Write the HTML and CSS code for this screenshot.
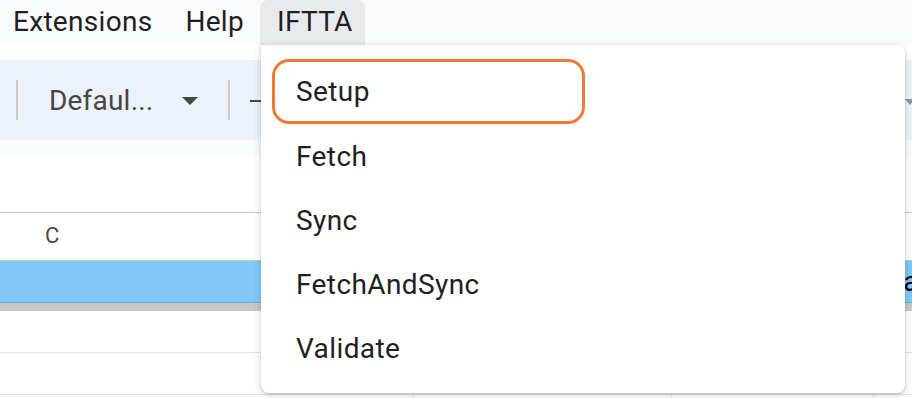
FILE: index.html
```html
<!DOCTYPE html>
<html>
<head>
<meta charset="utf-8">
<link rel="stylesheet" href="styles.css">
</head>
<body>
<div class="page">
  <div class="menubar">
    <span class="mitem ext">Extensions</span>
    <span class="mitem help">Help</span>
    <span class="mitem tab">IFTTA</span>
  </div>
  <div class="toolbar">
    <span class="sep"></span>
    <span class="font">Defaul...</span>
    <svg class="caret" width="16" height="8" viewBox="0 0 16 8"><path d="M0 0h16L8 8z" fill="#444746"/></svg>
    <span class="sep"></span>
    <span class="dash"></span>
    <span class="spacer"></span>
    <svg class="caret2" width="10" height="6" viewBox="0 0 10 6"><path d="M0 0h10L5 6z" fill="#8e918f"/></svg>
  </div>
  <div class="strip"></div>
  <div class="formula"></div>
  <div class="grid">
    <div class="row header"><span class="colname">C</span></div>
    <div class="row selected"><span class="rtext">ar</span></div>
    <div class="freeze"></div>
    <div class="row plain"></div>
    <div class="row plain cols"><span class="vl v1"></span><span class="vl v2"></span><span class="vl v3"></span></div>
  </div>

  <div class="menu">
    <div class="item active">Setup</div>
    <div class="item">Fetch</div>
    <div class="item">Sync</div>
    <div class="item">FetchAndSync</div>
    <div class="item">Validate</div>
  </div>
</div>
</body>
</html>
```

FILE: styles.css
```css
html, body {
  margin: 0;
  padding: 0;
  background: #ffffff;
  font-family: Roboto, "Liberation Sans", sans-serif;
  overflow: hidden;
}
.page {
  position: relative;
  width: 912px;
  height: 398px;
  background: #ffffff;
}
.menubar {
  height: 45px;
  background: #f9fbfd;
  display: flex;
  align-items: stretch;
  font-size: 28px;
  letter-spacing: 0.3px;
  color: #1f1f1f;
}
.mitem {
  display: flex;
  align-items: center;
  padding-bottom: 3px;
  box-sizing: border-box;
}
.ext { margin-left: 13px; }
.help { margin-left: 33px; }
.tab {
  margin-left: 16px;
  width: 105px;
  padding-left: 17px;
  box-sizing: border-box;
  background: #e9eaee;
  border-radius: 8px 8px 0 0;
}
.toolbar {
  margin-top: 15px;
  height: 80px;
  background: #edf2fa;
  display: flex;
  align-items: center;
  color: #444746;
  font-size: 28px;
  letter-spacing: 0.2px;
}
.sep {
  width: 2px;
  height: 40px;
  background: #c7c9cc;
}
.toolbar .sep:first-child { margin-left: 16px; }
.font { margin-left: 31px; }
.caret { margin-left: 29px; margin-right: 30px; margin-top: 2px; }
.dash {
  width: 12px;
  height: 2px;
  background: #444746;
  margin-left: 20px;
  margin-top: 2px;
}
.spacer { flex: 1; }
.caret2 { margin-right: -3px; margin-top: 4px; }
.strip {
  height: 16px;
  background: #f9fbfd;
}
.formula {
  height: 56px;
  background: #ffffff;
}
.grid {
  border-top: 1px solid #c4c7c5;
}
.row {
  position: relative;
  box-sizing: border-box;
}
.header {
  height: 48px;
  display: flex;
  align-items: center;
  font-size: 22px;
  color: #444746;
  border-bottom: 1px solid #c4c7c5;
}
.colname { margin-left: 45px; margin-top: -2px; }
.selected {
  height: 42px;
  background: #7fc8f8;
  border-bottom: 1px solid #6aaedc;
  display: flex;
  justify-content: flex-end;
  align-items: center;
  font-size: 28px;
  color: #000;
  overflow: hidden;
}
.rtext { margin-right: -16px; }
.freeze {
  height: 8px;
  background: #c7c7c7;
}
.plain {
  height: 42px;
  border-bottom: 1px solid #e1e3e1;
}
.vl {
  position: absolute;
  bottom: -10px;
  width: 1px;
  height: 12px;
  background: #e1e3e1;
}
.v1 { left: 413px; }
.v2 { left: 671px; }
.v3 { left: 873px; }

.menu {
  position: absolute;
  top: 45px;
  left: 261px;
  width: 644px;
  height: 348px;
  box-sizing: border-box;
  padding: 14px 11px;
  background: #ffffff;
  border-radius: 0 8px 8px 8px;
  box-shadow: 0 2px 6px 1px rgba(60, 64, 67, 0.18), 0 1px 2px rgba(60, 64, 67, 0.2);
  font-size: 28px;
  letter-spacing: 0.4px;
  color: #1f1f1f;
}
.item {
  height: 64px;
  display: flex;
  align-items: center;
  padding-left: 24px;
  box-sizing: border-box;
  padding-top: 3px;
}
.item.active {
  width: 313px;
  height: 65px;
  border: 3px solid #f07832;
  border-radius: 17px;
  padding-left: 21px;
  padding-top: 0;
  margin-bottom: -1px;
}
```
